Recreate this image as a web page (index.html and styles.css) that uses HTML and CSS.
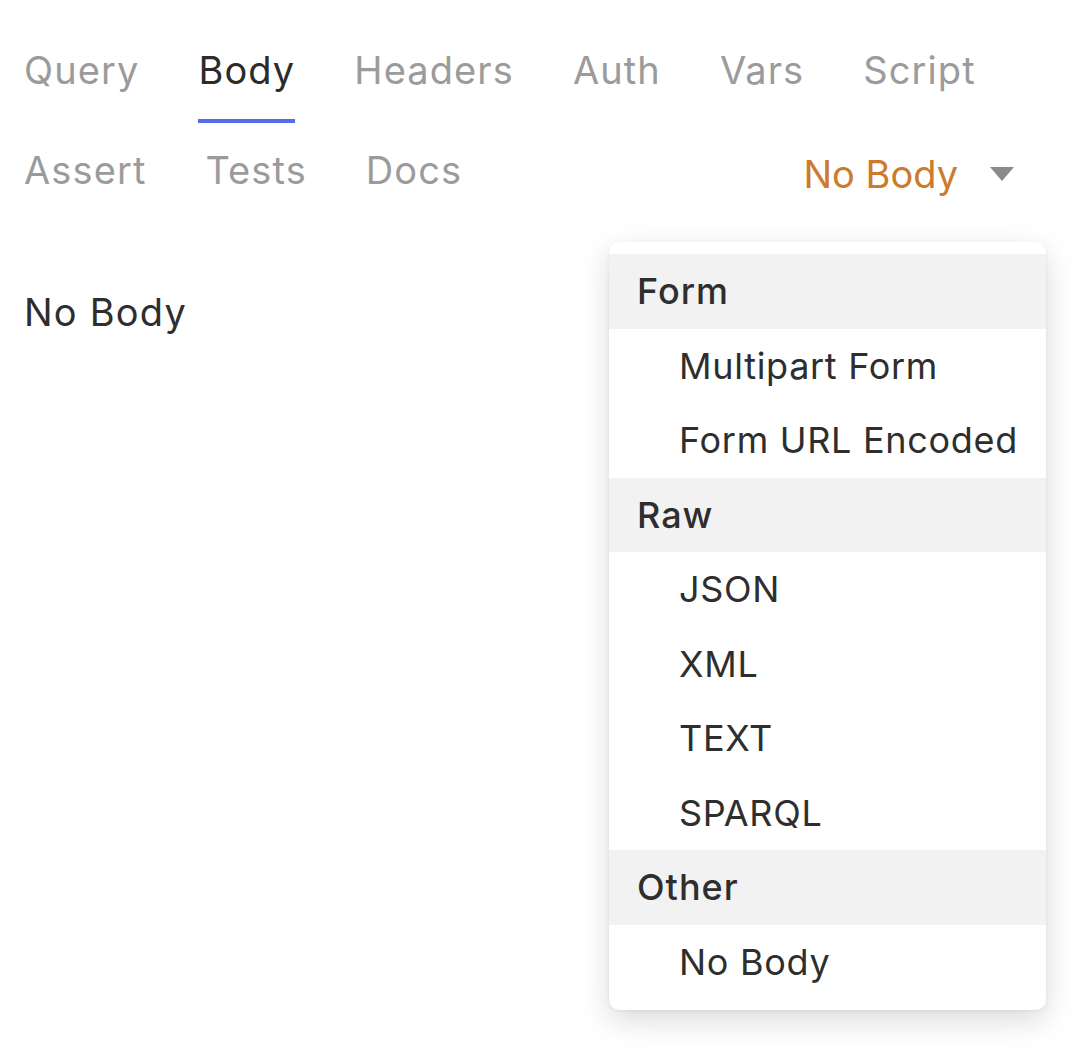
FILE: index.html
```html
<!DOCTYPE html>
<html>
<head>
<meta charset="utf-8">
<link rel="stylesheet" href="styles.css">
</head>
<body>
<div class="pane">
  <div class="tabs">
    <div class="tab">Query</div>
    <div class="tab active">Body</div>
    <div class="tab">Headers</div>
    <div class="tab">Auth</div>
    <div class="tab">Vars</div>
    <div class="tab">Script</div>
    <div class="tab">Assert</div>
    <div class="tab">Tests</div>
    <div class="tab">Docs</div>
    <div class="mode">
      <span class="mode-label">No Body</span>
      <svg class="caret" width="24" height="14" viewBox="0 0 24 14"><path d="M0 0 H24 L12 14 Z" fill="#8a8a8a"/></svg>
    </div>
  </div>
  <div class="content">No Body</div>

  <div class="menu">
    <div class="menu-head">Form</div>
    <div class="menu-item">Multipart Form</div>
    <div class="menu-item">Form URL Encoded</div>
    <div class="menu-head">Raw</div>
    <div class="menu-item">JSON</div>
    <div class="menu-item">XML</div>
    <div class="menu-item">TEXT</div>
    <div class="menu-item">SPARQL</div>
    <div class="menu-head">Other</div>
    <div class="menu-item">No Body</div>
  </div>
</div>
</body>
</html>
```

FILE: styles.css
```css
html, body {
  margin: 0;
  padding: 0;
  background: #ffffff;
}
body {
  font-family: Inter, "Noto Sans", sans-serif;
  color: #343434;
}
.pane {
  position: relative;
  width: 1086px;
  height: 1052px;
  box-sizing: border-box;
  padding: 23px 0 0 24px;
}
.tabs {
  display: flex;
  flex-wrap: wrap;
  align-items: flex-start;
  column-gap: 59px;
  row-gap: 0;
  padding-right: 72px;
}
.tab {
  font-size: 38px;
  line-height: 46px;
  letter-spacing: 1.1px;
  color: #9b9b9b;
  padding: 24px 0 26px;
  border-bottom: 4px solid transparent;
}
.tab.active {
  color: #2b2b2b;
  border-bottom-color: #546de5;
}
.mode {
  margin-left: auto;
  display: flex;
  align-items: center;
  padding-top: 28px;
  height: 46px;
}
.mode-label {
  font-size: 38px;
  line-height: 46px;
  color: #cc7a2c;
}
.caret {
  margin-left: 32px;
}
.content {
  font-size: 38px;
  line-height: 46px;
  letter-spacing: 1.2px;
  margin-top: 66px;
  color: #2e2e2e;
}
.menu {
  position: absolute;
  top: 242px;
  right: 40px;
  width: 437px;
  padding: 12px 0 11px;
  background: #ffffff;
  border-radius: 10px;
  box-shadow: 0 10px 30px rgba(0, 0, 0, 0.15), 0 1px 4px rgba(0, 0, 0, 0.06);
}
.menu-head {
  height: 74.5px;
  display: flex;
  align-items: center;
  padding-left: 28px;
  background: #f2f2f2;
  font-size: 36px;
  font-weight: 500;
  letter-spacing: 1px;
  color: #2e2e2e;
}
.menu-item {
  height: 74.5px;
  display: flex;
  align-items: center;
  padding-left: 70px;
  font-size: 36px;
  letter-spacing: 0.7px;
  color: #2e2e2e;
}
```
